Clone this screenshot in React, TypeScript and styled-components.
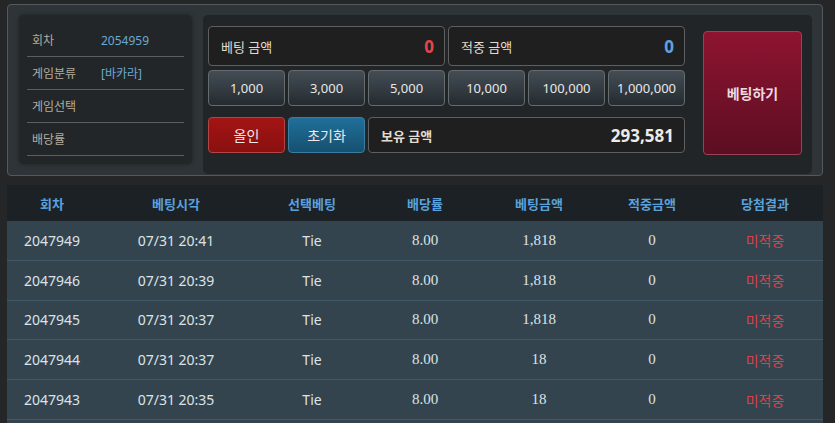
import * as React from 'react';
import styled, { createGlobalStyle } from 'styled-components';

const sans = `"Noto Sans", "Noto Sans CJK KR", sans-serif`;

const GlobalStyle = createGlobalStyle`
  html, body {
    margin: 0;
    padding: 0;
    background-color: #242628;
    font-family: ${sans};
  }
`;

const Page = styled.div`
  display: flex;
  flex-direction: column;
  gap: 9px;
  padding: 4px 12px 0 7px;
  width: 816px;
`;

const BetPanel = styled.div`
  background-color: #2e3437;
  border: 1px solid #535a5c;
  border-radius: 4px;
  box-sizing: border-box;
  display: flex;
  gap: 11px;
  height: 172px;
  padding: 10px 10px 1px 11px;
`;

const InfoBox = styled.div`
  background-color: #222629;
  border-radius: 5px;
  box-shadow: 0 0 4px rgba(0, 0, 0, 0.35);
  box-sizing: border-box;
  height: 149px;
  padding: 9px 8px 0;
  width: 174px;
`;

const InfoRow = styled.div`
  align-items: center;
  border-bottom: 1px solid #595e60;
  box-sizing: border-box;
  display: flex;
  font-size: 12px;
  height: 33px;
  padding-left: 5px;
`;

const InfoLabel = styled.span`
  color: #b3ad9f;
  width: 69px;
`;

const InfoValue = styled.span`
  color: #6aa9d4;
`;

const Controls = styled.div`
  background-color: #212527;
  border-radius: 5px;
  box-sizing: border-box;
  display: flex;
  flex: 1;
  gap: 18px;
  padding: 11px 10px 0 5px;
`;

const Grid = styled.div`
  display: grid;
  grid-template-columns: repeat(6, 77px);
  grid-template-rows: 40px 36px 43px;
  column-gap: 3px;
  row-gap: 4px;

  > :nth-child(n + 9) {
    margin-top: 7px;
  }
`;

const AmountBox = styled.div<{ $span: number }>`
  align-items: center;
  background-color: #1f1f20;
  border: 1px solid #5d5f60;
  border-radius: 4px;
  box-sizing: border-box;
  display: flex;
  grid-column: span ${(p) => p.$span};
  justify-content: space-between;
  padding: 0 10px 0 12px;
`;

const AmountLabel = styled.span<{ $bold?: boolean }>`
  color: #e4ddcf;
  font-size: 13px;
  font-weight: ${(p) => (p.$bold ? 700 : 400)};
`;

const AmountValue = styled.span<{ $color: string }>`
  color: ${(p) => p.$color};
  font-size: 17px;
  font-weight: 700;
`;

const ChipButton = styled.div<{ $variant?: 'red' | 'blue' }>`
  align-items: center;
  background: ${(p) =>
    p.$variant === 'red'
      ? 'linear-gradient(#a31414, #8a1010)'
      : p.$variant === 'blue'
        ? 'linear-gradient(#206f9a, #165070)'
        : 'linear-gradient(#444d55, #252b30)'};
  border: 1px solid
    ${(p) =>
      p.$variant === 'red' ? '#b34545' : p.$variant === 'blue' ? '#3a7ea3' : '#666b6e'};
  border-radius: 4px;
  box-sizing: border-box;
  color: ${(p) => (p.$variant ? '#f0e8e8' : '#e8e8e8')};
  display: flex;
  font-size: ${(p) => (p.$variant ? '14px' : '13px')};
  justify-content: center;
`;

const BetButton = styled.div`
  align-items: center;
  align-self: flex-start;
  background: linear-gradient(#8e1431, #5c0e22);
  border: 1px solid #9a4156;
  border-radius: 4px;
  box-sizing: border-box;
  color: #ecdadf;
  display: flex;
  font-size: 14px;
  font-weight: 700;
  height: 124px;
  justify-content: center;
  margin-top: 5px;
  width: 99px;
`;

const TableWrap = styled.div`
  background-color: #34444f;
  min-height: 260px;
`;

const Table = styled.table`
  border-collapse: collapse;
  table-layout: fixed;
  width: 816px;
`;

const HeadCell = styled.th<{ $w: number }>`
  background-color: #1c2125;
  color: #5aa2dc;
  font-size: 13px;
  font-weight: 700;
  height: 36px;
  padding: 0;
  width: ${(p) => p.$w}px;
`;

const Row = styled.tr`
  background-color: #34444f;
  border-bottom: 1px solid #3f5968;
`;

const Cell = styled.td<{ $serif?: boolean; $miss?: boolean }>`
  color: ${(p) => (p.$miss ? '#d8434a' : '#dbe3e8')};
  font-family: ${(p) => (p.$serif ? `"Liberation Serif", serif` : sans)};
  font-size: ${(p) => (p.$serif ? '15px' : '14px')};
  height: 38.8px;
  padding: 0;
  text-align: center;
`;

const columns = [
  { title: '회차', width: 90 },
  { title: '베팅시각', width: 158 },
  { title: '선택베팅', width: 114 },
  { title: '배당률', width: 112 },
  { title: '베팅금액', width: 116 },
  { title: '적중금액', width: 110 },
  { title: '당첨결과', width: 116 },
];

const history = [
  { round: '2047949', time: '07/31 20:41', pick: 'Tie', odds: '8.00', bet: '1,818', win: '0' },
  { round: '2047946', time: '07/31 20:39', pick: 'Tie', odds: '8.00', bet: '1,818', win: '0' },
  { round: '2047945', time: '07/31 20:37', pick: 'Tie', odds: '8.00', bet: '1,818', win: '0' },
  { round: '2047944', time: '07/31 20:37', pick: 'Tie', odds: '8.00', bet: '18', win: '0' },
  { round: '2047943', time: '07/31 20:35', pick: 'Tie', odds: '8.00', bet: '18', win: '0' },
];

const chips = ['1,000', '3,000', '5,000', '10,000', '100,000', '1,000,000'];

const App = () => {
  return (
    <>
      <GlobalStyle />
      <Page>
        <BetPanel>
          <InfoBox>
            <InfoRow>
              <InfoLabel>회차</InfoLabel>
              <InfoValue>2054959</InfoValue>
            </InfoRow>
            <InfoRow>
              <InfoLabel>게임분류</InfoLabel>
              <InfoValue>[바카라]</InfoValue>
            </InfoRow>
            <InfoRow>
              <InfoLabel>게임선택</InfoLabel>
            </InfoRow>
            <InfoRow>
              <InfoLabel>배당률</InfoLabel>
            </InfoRow>
          </InfoBox>
          <Controls>
            <Grid>
              <AmountBox $span={3}>
                <AmountLabel>베팅 금액</AmountLabel>
                <AmountValue $color="#e2474b">0</AmountValue>
              </AmountBox>
              <AmountBox $span={3}>
                <AmountLabel>적중 금액</AmountLabel>
                <AmountValue $color="#5ea3e0">0</AmountValue>
              </AmountBox>
              {chips.map((c) => (
                <ChipButton key={c}>{c}</ChipButton>
              ))}
              <ChipButton $variant="red">올인</ChipButton>
              <ChipButton $variant="blue">초기화</ChipButton>
              <AmountBox $span={4}>
                <AmountLabel $bold>보유 금액</AmountLabel>
                <AmountValue $color="#ecebe6">293,581</AmountValue>
              </AmountBox>
            </Grid>
            <BetButton>베팅하기</BetButton>
          </Controls>
        </BetPanel>
        <TableWrap>
          <Table>
            <thead>
              <tr>
                {columns.map((c) => (
                  <HeadCell key={c.title} $w={c.width}>
                    {c.title}
                  </HeadCell>
                ))}
              </tr>
            </thead>
            <tbody>
              {history.map((h) => (
                <Row key={h.round}>
                  <Cell>{h.round}</Cell>
                  <Cell>{h.time}</Cell>
                  <Cell>{h.pick}</Cell>
                  <Cell $serif>{h.odds}</Cell>
                  <Cell $serif>{h.bet}</Cell>
                  <Cell $serif>{h.win}</Cell>
                  <Cell $miss>미적중</Cell>
                </Row>
              ))}
            </tbody>
          </Table>
        </TableWrap>
      </Page>
    </>
  );
};

export default App;
